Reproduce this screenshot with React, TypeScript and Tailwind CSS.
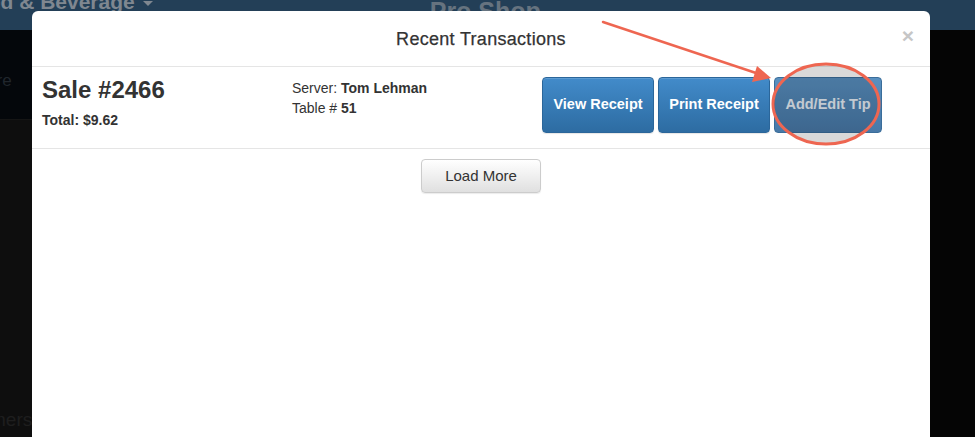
export default function App() {
  const font = { fontFamily: '"Helvetica Neue", "Liberation Sans", Arial, sans-serif' };
  return (
    <div className="relative w-[975px] h-[437px] overflow-hidden bg-[#0e0e0e]" style={font}>
      {/* page behind the backdrop */}
      <div className="flex h-[30px] items-start bg-[#233f57]">
        <div className="ml-[-38px] mt-[-10px] flex items-center gap-2 text-[21px] font-bold leading-[24px] text-[#7f8790]">
          <span>Food &amp; Beverage</span>
          <span className="mt-[2px] h-0 w-0 border-x-[5px] border-t-[5px] border-x-transparent border-t-[#7f8790]" />
        </div>
        <div className="ml-[277px] mt-[-3px] text-[25px] font-bold leading-[28px] text-[#66737f]">Pro Shop</div>
      </div>
      <div className="flex h-[90px] items-center border-b border-[#151515] bg-[#04070b]">
        <span className="ml-[-29px] mt-[12px] text-[17px] text-[#20262d]">Store</span>
      </div>
      <div className="flex h-[317px] flex-col justify-end pb-[3px]">
        <span className="ml-[-10px] text-[19px] text-[#1e1e1e]">mers</span>
      </div>
      <div className="absolute right-0 top-[30px] bottom-0 w-[46px] bg-[#050505]" />

      {/* modal */}
      <div className="absolute left-[32px] top-[11px] bottom-0 w-[898px] rounded-t-[6px] bg-white text-[#333]">
        <div className="relative flex h-[56px] items-center justify-center border-b border-[#e5e5e5]">
          <h4 className="mt-[1px] text-[18px] tracking-[0.3px] text-[#333] [-webkit-text-stroke:0.25px_#333]">Recent Transactions</h4>
          <span className="absolute right-[16px] top-[14px] text-[21px] font-bold leading-[21px] text-[#c6c6c6]">×</span>
        </div>
        <div className="flex h-[82px] border-b border-[#e5e5e5] px-[10px]">
          <div className="w-[250px] pt-[9px]">
            <div className="text-[24px] font-bold leading-[28px]">Sale #2466</div>
            <div className="mt-[8px] text-[14px] font-bold leading-[16px]">Total: $9.62</div>
          </div>
          <div className="w-[250px] pt-[11px] text-[14px] leading-[20px]">
            <div>Server: <b>Tom Lehman</b></div>
            <div>Table # <b>51</b></div>
          </div>
          <div className="flex gap-[4px] pt-[10px]">
            <button className="h-[56px] w-[112px] rounded-[4px] border border-[#2b669a] bg-gradient-to-b from-[#428bca] to-[#2d6ca2] text-[14.5px] font-bold text-white shadow-[inset_0_1px_0_rgba(255,255,255,0.15),0_1px_1px_rgba(0,0,0,0.1)]">
              View Receipt
            </button>
            <button className="h-[56px] w-[112px] rounded-[4px] border border-[#2b669a] bg-gradient-to-b from-[#428bca] to-[#2d6ca2] text-[14.5px] font-bold text-white shadow-[inset_0_1px_0_rgba(255,255,255,0.15),0_1px_1px_rgba(0,0,0,0.1)]">
              Print Receipt
            </button>
            <button className="h-[56px] w-[108px] rounded-[4px] border border-[#3a6d9a] bg-gradient-to-b from-[#5990c0] to-[#4879a8] text-[14.5px] font-bold text-[#e6eef6]">
              Add/Edit Tip
            </button>
          </div>
        </div>
        <div className="flex justify-center pt-[10px]">
          <button className="h-[34px] w-[120px] rounded-[4px] border border-[#ccc] bg-gradient-to-b from-white to-[#e0e0e0] text-[15px] text-[#333] shadow-[0_1px_1px_rgba(0,0,0,0.08)]">
            Load More
          </button>
        </div>
      </div>

      {/* annotation */}
      <svg className="pointer-events-none absolute left-0 top-0" width="975" height="437">
        <ellipse cx="826" cy="104" rx="53" ry="40" fill="rgba(0,0,0,0.15)" stroke="#ee6651" strokeWidth="3" />
        <line x1="603" y1="22" x2="756" y2="73" stroke="#ee6651" strokeWidth="2.5" strokeLinecap="round" />
        <polygon points="771,78 752,82 757,66" fill="#ee6651" />
      </svg>
    </div>
  );
}
